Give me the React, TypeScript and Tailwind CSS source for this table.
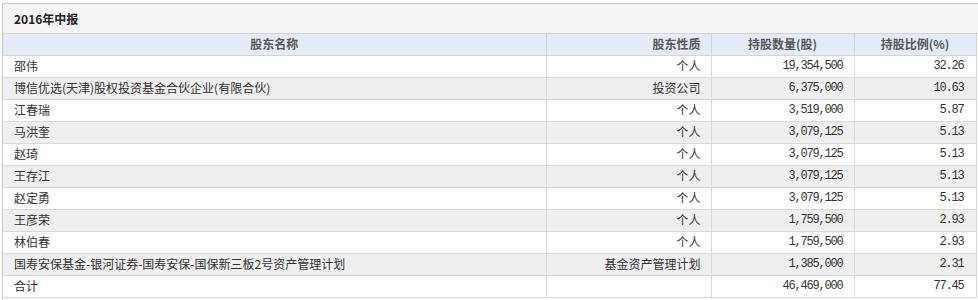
import React from 'react';

const rows = [
  { name: '邵伟', type: '个人', count: '19,354,500', ratio: '32.26' },
  { name: '博信优选(天津)股权投资基金合伙企业(有限合伙)', type: '投资公司', count: '6,375,000', ratio: '10.63' },
  { name: '江春瑞', type: '个人', count: '3,519,000', ratio: '5.87' },
  { name: '马洪奎', type: '个人', count: '3,079,125', ratio: '5.13' },
  { name: '赵琦', type: '个人', count: '3,079,125', ratio: '5.13' },
  { name: '王存江', type: '个人', count: '3,079,125', ratio: '5.13' },
  { name: '赵定勇', type: '个人', count: '3,079,125', ratio: '5.13' },
  { name: '王彦荣', type: '个人', count: '1,759,500', ratio: '2.93' },
  { name: '林伯春', type: '个人', count: '1,759,500', ratio: '2.93' },
  { name: '国寿安保基金-银河证券-国寿安保-国保新三板2号资产管理计划', type: '基金资产管理计划', count: '1,385,000', ratio: '2.31' },
  { name: '合计', type: '', count: '46,469,000', ratio: '77.45' },
];

const num = "font-['Liberation_Mono',monospace] tracking-[-1.2px]";

export default function App() {
  return (
    <div className="w-[978px] h-[300px] bg-white overflow-hidden pt-[3px] pl-[2px] font-['Noto_Sans_CJK_SC','Noto_Sans',sans-serif] text-[12px] text-[#333]">
      <div className="w-[990px] border-l border-t border-b border-[#c9c9c9]">
        <div className="h-[30px] bg-[#f5f5f5] flex items-center pl-[11px] font-bold text-[12px] text-[#222] border-b border-[#d4d4d4]">
          2016年中报
        </div>
        <table className="w-[973px] border-collapse table-fixed">
          <colgroup>
            <col className="w-[543px]" />
            <col className="w-[165px]" />
            <col className="w-[143px]" />
            <col className="w-[122px]" />
          </colgroup>
          <thead>
            <tr className="h-[21px] bg-[#e4ebf7] text-[#555] font-bold">
              <th className="border-r border-b border-[#d4d4d4] text-center p-0">股东名称</th>
              <th className="border-r border-b border-[#d4d4d4] text-right pr-[10px] p-0">股东性质</th>
              <th className="border-r border-b border-[#d4d4d4] text-center p-0">持股数量(股)</th>
              <th className="border-r border-b border-[#d4d4d4] text-center p-0">持股比例(%)</th>
            </tr>
          </thead>
          <tbody>
            {rows.map((r, i) => (
              <tr key={i} className={`h-[22px] ${i % 2 === 1 ? 'bg-[#efefef]' : 'bg-white'}`}>
                <td className="border-r border-b border-[#d9d9d9] pl-[11px] whitespace-nowrap">{r.name}</td>
                <td className="border-r border-b border-[#d9d9d9] text-right pr-[10px] whitespace-nowrap">{r.type}</td>
                <td className={`border-r border-b border-[#d9d9d9] text-right pr-[11px] ${num}`}>{r.count}</td>
                <td className={`border-r border-b border-[#d9d9d9] text-right pr-[12px] ${num}`}>{r.ratio}</td>
              </tr>
            ))}
          </tbody>
        </table>
        <div className="h-[2px]" />
      </div>
    </div>
  );
}
